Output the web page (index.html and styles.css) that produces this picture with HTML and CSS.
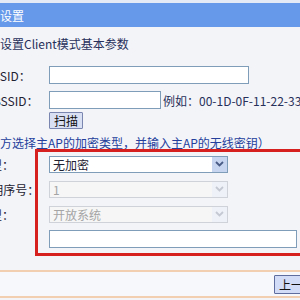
FILE: index.html
```html
<!DOCTYPE html>
<html lang="zh-CN">
<head>
  <meta charset="UTF-8" />
  <title>Client模式设置</title>
  <link rel="stylesheet" href="styles.css">
</head>
<body>
  <div class="page">
    <div class="titlebar"><span class="title">无线设置</span></div>

    <div class="heading">设置Client模式基本参数</div>

    <div class="form">
      <div class="row">
        <label class="lbl" for="ssid">主AP的SSID：</label>
        <input class="txt" type="text" id="ssid" />
      </div>
      <div class="row">
        <label class="lbl" for="bssid">主AP的BSSID：</label>
        <input class="txt short" type="text" id="bssid" />
        <span class="hint">例如：00-1D-0F-11-22-33</span>
      </div>
      <div class="row scan-row">
        <span class="lbl"></span>
        <button class="btn">扫描</button>
      </div>

      <div class="note">（请在下方选择主AP的加密类型，并输入主AP的无线密钥）</div>

      <div class="row">
        <span class="lbl">密钥类型：</span>
        <div class="select">
          <span class="val">无加密</span>
          <span class="arrow"><svg width="9" height="6" viewBox="0 0 9 6"><path d="M1 1 L4.5 4.5 L8 1" fill="none" stroke="currentColor" stroke-width="1.8"/></svg></span>
        </div>
      </div>
      <div class="row">
        <span class="lbl">WEP密钥序号：</span>
        <div class="select disabled">
          <span class="val">1</span>
          <span class="arrow"><svg width="9" height="6" viewBox="0 0 9 6"><path d="M1 1 L4.5 4.5 L8 1" fill="none" stroke="currentColor" stroke-width="1.8"/></svg></span>
        </div>
      </div>
      <div class="row">
        <span class="lbl">认证类型：</span>
        <div class="select disabled">
          <span class="val">开放系统</span>
          <span class="arrow"><svg width="9" height="6" viewBox="0 0 9 6"><path d="M1 1 L4.5 4.5 L8 1" fill="none" stroke="currentColor" stroke-width="1.8"/></svg></span>
        </div>
      </div>
      <div class="row">
        <span class="lbl">密钥：</span>
        <input class="txt wide" type="text" />
      </div>

      <!-- red annotation frame drawn over the key settings -->
      <div class="mark"></div>
    </div>

    <div class="footer">
      <button class="btn back">上一步</button>
    </div>
  </div>
</body>
</html>
```

FILE: styles.css
```css
html, body { margin: 0; padding: 0; overflow: hidden; }
body { width: 300px; height: 300px; background: #f3f4f8; font-family: "Noto Sans CJK SC", "Liberation Sans", sans-serif; font-size: 12px; color: #1e2233; }
.page { width: 300px; height: 300px; overflow: hidden; border-top: 3px solid #e4ebf7; box-sizing: border-box; }

.titlebar { height: 24px; background: #6699ea; color: #fff; display: flex; align-items: center; }
.title { margin-left: -24px; font-size: 12px; }

.heading { margin-top: 8px; height: 18px; line-height: 18px; color: #27305a; white-space: nowrap; }

.form { position: relative; margin-top: 10px; margin-left: -46px; }
.row { display: flex; align-items: center; height: 24px; white-space: nowrap; }
.row + .row { margin-top: 1px; }
.row + .scan-row { margin-top: 0; }
.lbl { width: 95px; flex: none; color: #1e2233; }

.txt { height: 18px; box-sizing: border-box; border: 1px solid #7f9db9; background: #fff; padding: 0 3px; margin: 0; width: 200px; }
.txt.short { width: 112px; }
.txt.wide { width: 248px; }
.hint { margin-left: 2px; color: #27305a; }

.scan-row { height: 17px; }
.btn { height: 17px; padding: 0 4px; margin: 0; font-family: inherit; font-size: 12px; line-height: 15px; color: #111; background: #d9e0f4; border: 1px solid #7a86b0; border-radius: 1px; }

.note { margin-top: 5px; margin-left: -2px; height: 18px; line-height: 18px; color: #24409c; white-space: nowrap; }

.select { width: 179px; height: 17px; box-sizing: border-box; border: 1px solid #7f9db9; background: #fff; display: flex; align-items: center; justify-content: space-between; }
.select .val { padding-left: 3px; }
.select .arrow { width: 15px; height: 15px; background: #c7d5f1; color: #4a5c86; display: flex; align-items: center; justify-content: center; }
.select.disabled { border-color: #cfd2d8; background: #f6f6f6; color: #a5a5a5; }
.select.disabled .arrow { background: #eef1f7; color: #c4c8d2; }

.mark { position: absolute; left: 81px; top: 86px; width: 300px; height: 107px; border: 3px solid #d61f1f; box-sizing: border-box; }

.footer { margin-top: 19px; border-top: 2px solid #f3cfb2; border-bottom: 2px solid #f3cfb2; background: #f7f8fb; height: 24px; display: flex; justify-content: flex-end; align-items: center; }
.btn.back { margin-right: -20px; height: 19px; background: #d3dcf6; border-color: #5e6c9e; }
```
